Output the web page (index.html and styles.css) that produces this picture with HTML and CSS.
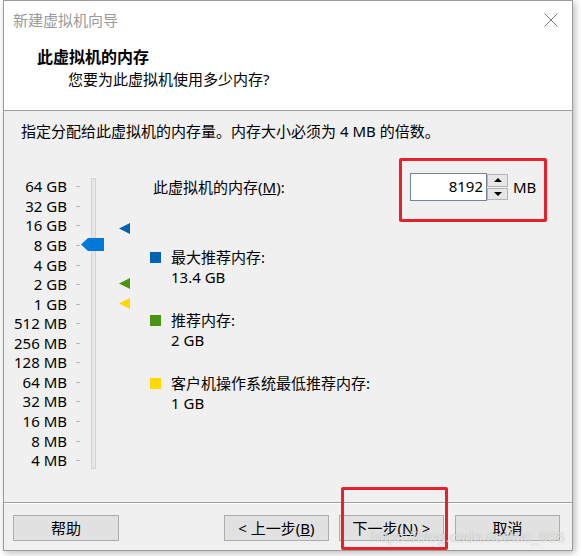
FILE: index.html
```html
<!DOCTYPE html>
<html lang="zh-CN">
<head>
    <meta charset="UTF-8">
    <title>新建虚拟机向导</title>
    <link rel="stylesheet" href="styles.css">
</head>
<body>
    <div class="window">
        <div class="top">
            <div class="titlebar">
                <span class="title-text">新建虚拟机向导</span>
                <svg class="close" width="14" height="14" viewBox="0 0 14 14">
                    <path d="M0.5 0.5 L13.5 13.5 M13.5 0.5 L0.5 13.5" stroke="#7a7a7a" stroke-width="1" fill="none"/>
                </svg>
            </div>
            <div class="heading">此虚拟机的内存</div>
            <div class="subheading">您要为此虚拟机使用多少内存?</div>
        </div>

        <div class="content">
            <p class="intro">指定分配给此虚拟机的内存量。内存大小必须为 4 MB 的倍数。</p>

            <div class="slider-row">
                <div class="scale">
                    <div class="mark"><span>64 GB</span><i></i></div>
                    <div class="mark"><span>32 GB</span><i></i></div>
                    <div class="mark"><span>16 GB</span><i></i></div>
                    <div class="mark"><span>8 GB</span><i></i></div>
                    <div class="mark"><span>4 GB</span><i></i></div>
                    <div class="mark"><span>2 GB</span><i></i></div>
                    <div class="mark"><span>1 GB</span><i></i></div>
                    <div class="mark"><span>512 MB</span><i></i></div>
                    <div class="mark"><span>256 MB</span><i></i></div>
                    <div class="mark"><span>128 MB</span><i></i></div>
                    <div class="mark"><span>64 MB</span><i></i></div>
                    <div class="mark"><span>32 MB</span><i></i></div>
                    <div class="mark"><span>16 MB</span><i></i></div>
                    <div class="mark"><span>8 MB</span><i></i></div>
                    <div class="mark"><span>4 MB</span><i></i></div>

                    <div class="track"></div>
                    <div class="thumb" style="top: 61px"></div>
                    <div class="pointer blue" style="top: 46px"></div>
                    <div class="pointer green" style="top: 101px"></div>
                    <div class="pointer yellow" style="top: 121px"></div>
                </div>

                <div class="panel">
                    <div class="mem-row">
                        <label class="mem-label">此虚拟机的内存(<u>M</u>):</label>
                        <div class="spin-box">
                            <div class="value">8192</div>
                            <div class="spin">
                                <div class="spin-btn"><b class="up"></b></div>
                                <div class="spin-btn"><b class="down"></b></div>
                            </div>
                        </div>
                        <span class="unit">MB</span>
                    </div>

                    <div class="legend">
                        <div class="legend-title"><span class="swatch blue"></span>最大推荐内存:</div>
                        <div class="legend-value">13.4 GB</div>
                    </div>
                    <div class="legend">
                        <div class="legend-title"><span class="swatch green"></span>推荐内存:</div>
                        <div class="legend-value">2 GB</div>
                    </div>
                    <div class="legend">
                        <div class="legend-title"><span class="swatch yellow"></span>客户机操作系统最低推荐内存:</div>
                        <div class="legend-value">1 GB</div>
                    </div>
                </div>
            </div>
        </div>

        <div class="footer">
            <button class="btn help">帮助</button>
            <div class="btn-group">
                <button class="btn">&lt; 上一步(<u>B</u>)</button>
                <button class="btn">下一步(<u>N</u>) &gt;</button>
                <button class="btn">取消</button>
            </div>
        </div>
    </div>

    <!-- annotations drawn over the screenshot -->
    <div class="highlight hl-memory"></div>
    <div class="highlight hl-next"></div>
    <div class="watermark">https://blog.csdn.net/dlc_996</div>
</body>
</html>
```

FILE: styles.css
```css
:root {
    --face: #f0f0f0;
    --line: #a0a0a0;
    --btn-bg: #e1e1e1;
    --btn-border: #adadad;
    --blue: #0063b1;
    --thumb: #0078d7;
    --green: #4b9412;
    --yellow: #ffd800;
    --red: #e8202c;
}

* {
    box-sizing: border-box;
}

body {
    margin: 0;
    background: #ffffff;
    font-family: "Noto Sans", "Noto Sans CJK SC", sans-serif;
    font-size: 15px;
    color: #000;
    position: relative;
    width: 581px;
    height: 556px;
    overflow: hidden;
}

.window {
    margin-left: 3px;
    width: 570px;
    height: 551px;
    border: 1px solid #9c9c9c;
    background: var(--face);
    box-shadow: 2px 2px 7px rgba(0, 0, 0, 0.28);
    display: flex;
    flex-direction: column;
}

/* header area */
.top {
    background: #fff;
    height: 110px;
    border-bottom: 1px solid var(--line);
}

.titlebar {
    height: 38px;
    display: flex;
    align-items: center;
    justify-content: space-between;
    padding: 0 14px 0 9px;
}

.title-text {
    color: #9a9a9a;
    line-height: 20px;
}

.close {
    display: block;
    margin-top: 0;
}

.heading {
    margin-top: 8px;
    padding-left: 33px;
    font-size: 16px;
    font-weight: bold;
    line-height: 20px;
}

.subheading {
    margin-top: 2px;
    padding-left: 64px;
    line-height: 20px;
}

/* main body */
.content {
    height: 392px;
    border-bottom: 1px solid var(--line);
    box-shadow: 0 1px 0 #fff;
    padding-top: 10px;
}

.intro {
    margin: 0;
    padding-left: 17px;
    line-height: 20px;
}

.slider-row {
    margin-top: 36px;
    display: flex;
}

.scale {
    position: relative;
    width: 130px;
}

.mark {
    height: 19.57px;
    display: flex;
    align-items: center;
}

.mark span {
    width: 63px;
    text-align: right;
    line-height: 19px;
    white-space: nowrap;
}

.mark i {
    display: block;
    width: 4px;
    height: 1px;
    margin-left: 9px;
    background: #b9b9b9;
}

.track {
    position: absolute;
    left: 87px;
    top: 1px;
    width: 5px;
    height: 291px;
    background: #e7e7e7;
    border: 1px solid #d4d4d4;
}

.thumb {
    position: absolute;
    left: 77px;
    width: 23px;
    height: 13px;
    background: var(--thumb);
    clip-path: polygon(0 50%, 7px 0, 100% 0, 100% 100%, 7px 100%);
}

.pointer {
    position: absolute;
    left: 115px;
    width: 11px;
    height: 11px;
    clip-path: polygon(0 50%, 100% 0, 100% 100%);
}

.pointer.blue { background: var(--blue); }
.pointer.green { background: var(--green); }
.pointer.yellow { background: var(--yellow); }

.panel {
    margin-left: 16px;
    flex: 1;
}

.mem-row {
    margin-top: -4px;
    height: 28px;
    display: flex;
    align-items: center;
}

.mem-label {
    width: 260px;
    padding-left: 3px;
    line-height: 20px;
}

.spin-box {
    display: flex;
    height: 28px;
}

.value {
    width: 77px;
    height: 28px;
    background: #fff;
    border: 1px solid #7a8391;
    text-align: right;
    padding-right: 3px;
    line-height: 25px;
}

.spin {
    width: 21px;
    display: flex;
    flex-direction: column;
    gap: 1px;
    padding: 1px 0;
}

.spin-btn {
    flex: 1;
    background: #e6e6e6;
    border: 1px solid #b4b4b4;
    display: flex;
    align-items: center;
    justify-content: center;
}

.spin-btn b {
    width: 0;
    height: 0;
    border-left: 4px solid transparent;
    border-right: 4px solid transparent;
}

.spin-btn .up { border-bottom: 4px solid #000; }
.spin-btn .down { border-top: 4px solid #000; }

.unit {
    margin-left: 5px;
    line-height: 20px;
}

.legend {
    margin-top: 23px;
    line-height: 20px;
}

.mem-row + .legend {
    margin-top: 46px;
}

.legend-title {
    display: flex;
    align-items: center;
}

.swatch {
    width: 11px;
    height: 11px;
    margin-right: 10px;
}

.swatch.blue { background: var(--blue); }
.swatch.green { background: var(--green); }
.swatch.yellow { background: var(--yellow); }

.legend-value {
    padding-left: 21px;
}

/* buttons */
.footer {
    flex: 1;
    display: flex;
    justify-content: space-between;
    padding: 11px 12px 0 9px;
    margin-top: 1px;
}

.btn-group {
    display: flex;
    gap: 10px;
}

.btn {
    width: 105px;
    height: 26px;
    background: var(--btn-bg);
    border: 1px solid var(--btn-border);
    font-family: inherit;
    font-size: 15px;
    color: #000;
    padding: 0;
    line-height: 22px;
}

.btn.help {
    width: 106px;
}

.btn-group .btn:last-child {
    margin-left: 1px;
}

/* screenshot annotations */
.highlight {
    position: absolute;
    border: 3px solid var(--red);
    border-radius: 2px;
}

.hl-memory {
    left: 399px;
    top: 158px;
    width: 148px;
    height: 64px;
}

.hl-next {
    left: 341px;
    top: 487px;
    width: 107px;
    height: 63px;
}

.watermark {
    position: absolute;
    left: 371px;
    top: 528px;
    font-family: "Liberation Sans", Arial, sans-serif;
    font-size: 15px;
    color: rgba(255, 255, 255, 0.75);
    text-shadow: 0 0 1px rgba(0, 0, 0, 0.35);
    letter-spacing: 0.1px;
}
```
